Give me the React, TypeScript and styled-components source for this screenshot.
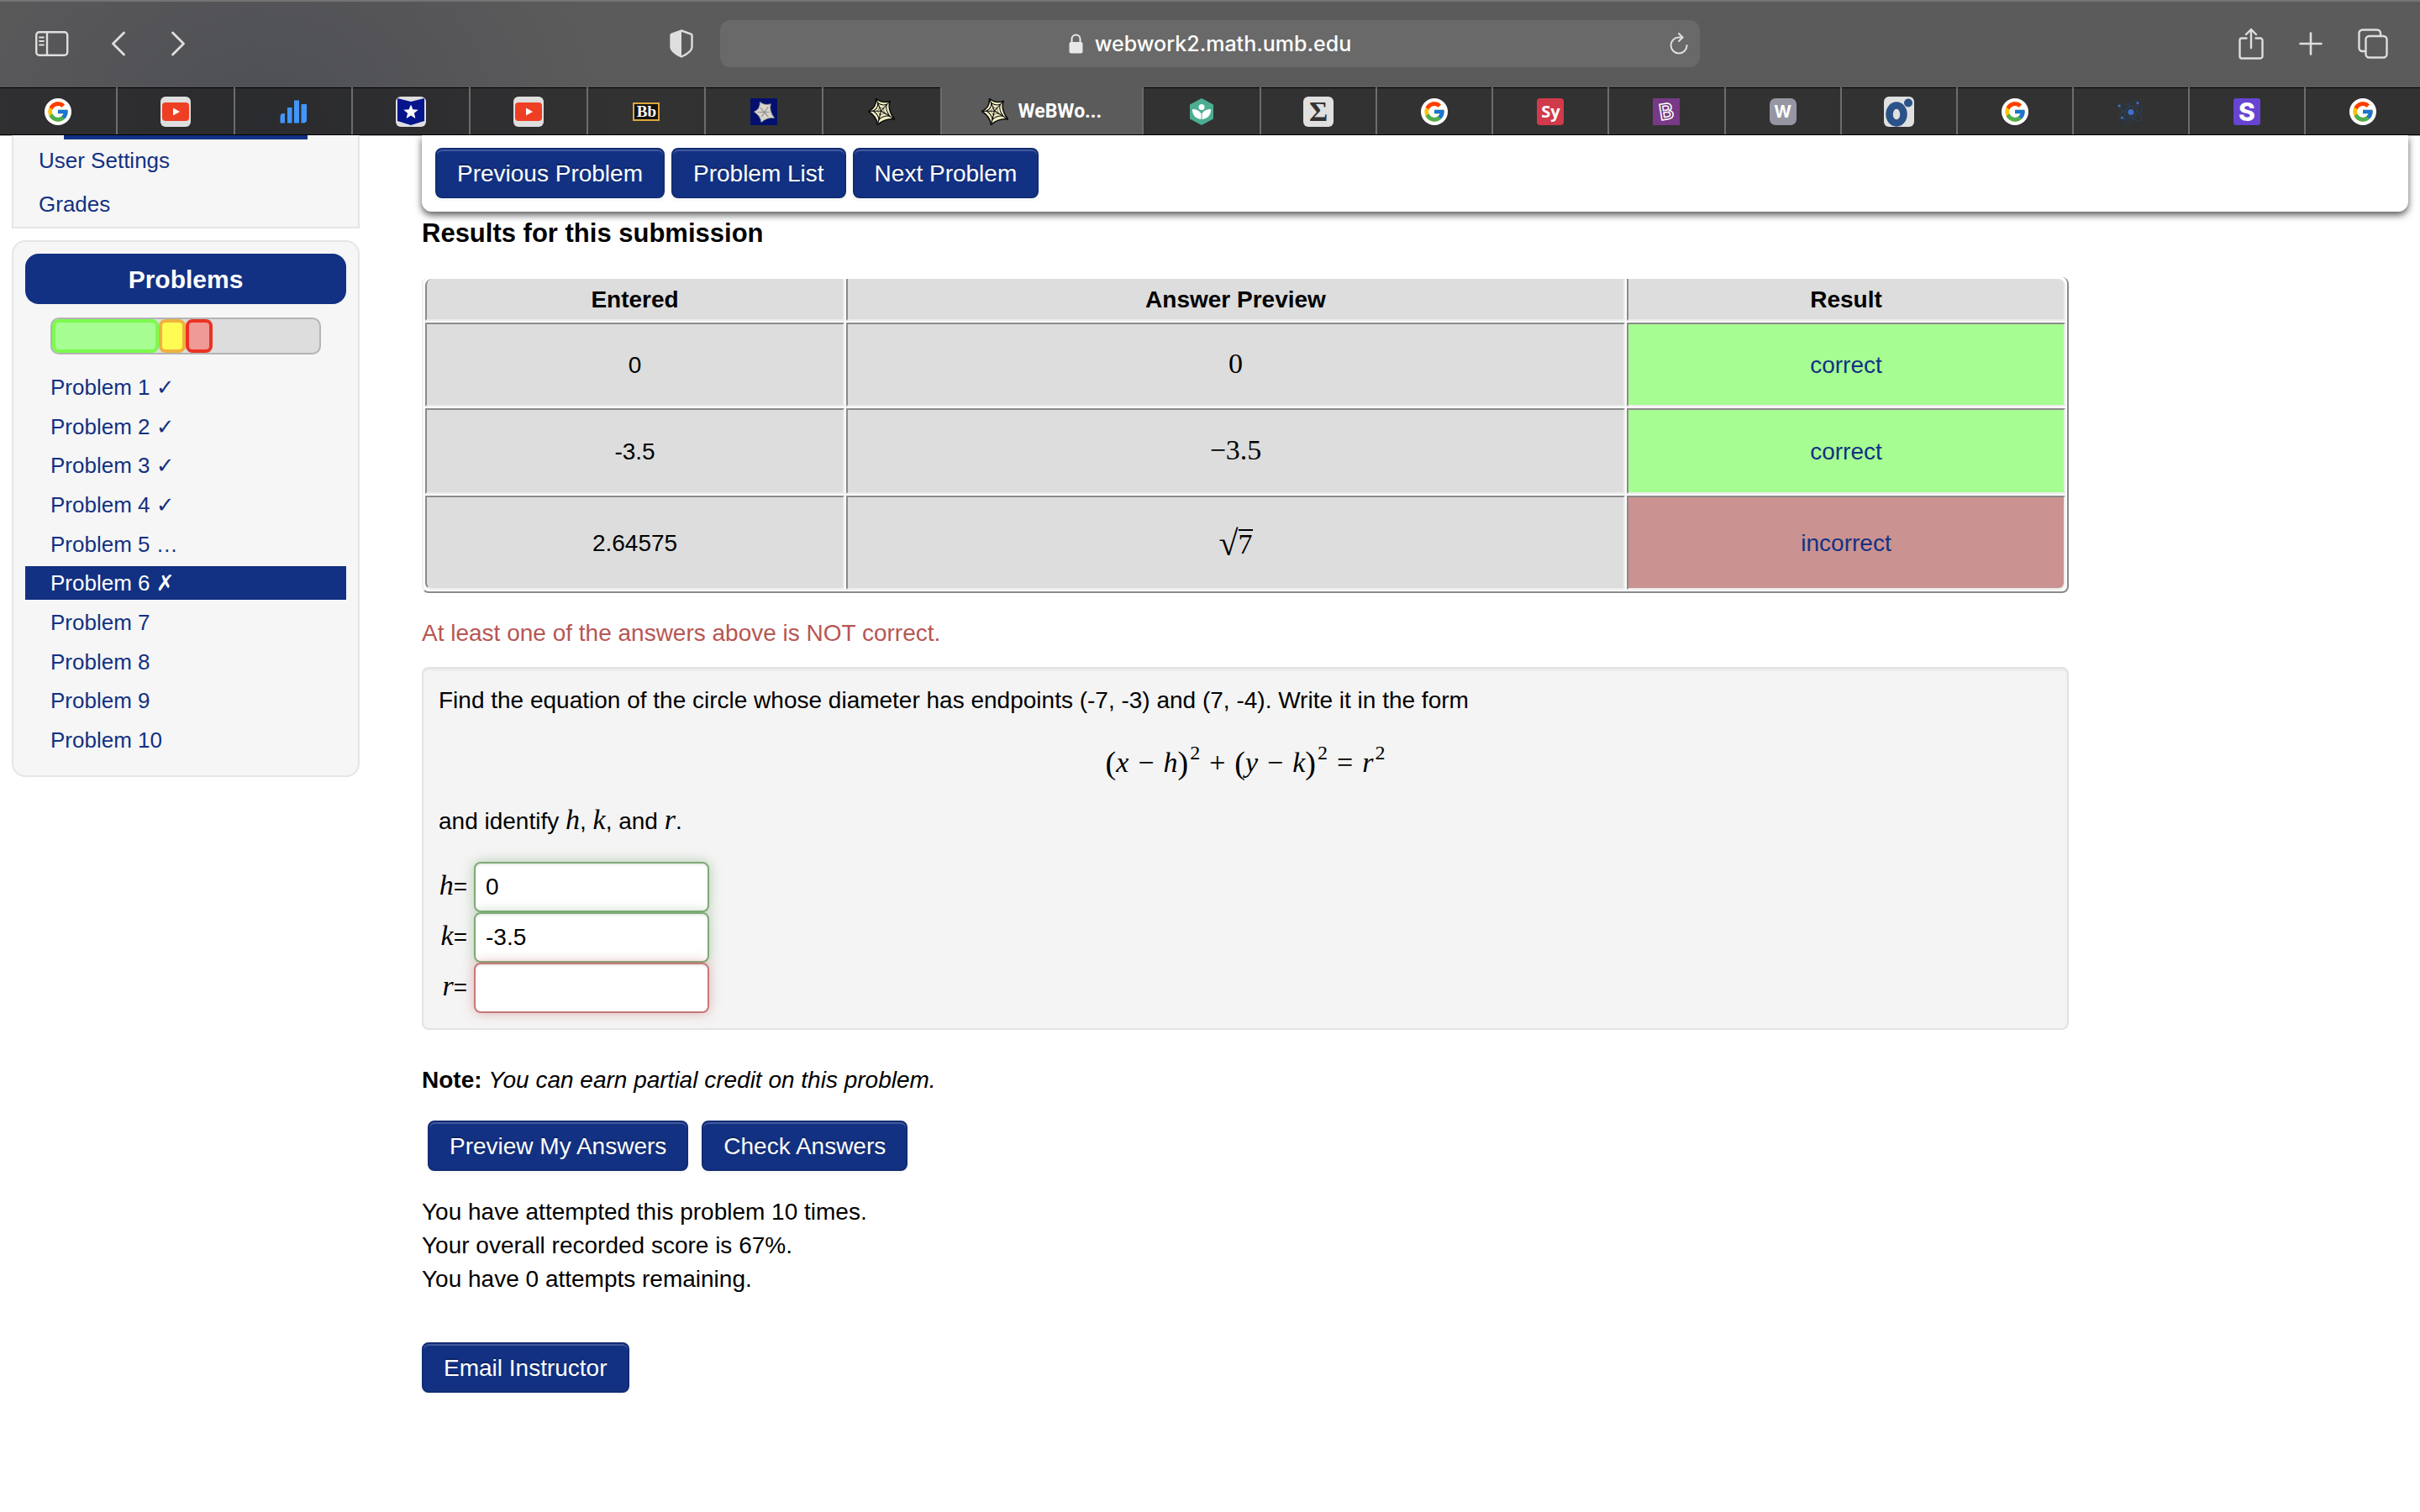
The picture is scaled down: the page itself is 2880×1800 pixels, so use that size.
import React from 'react';
import styled, { createGlobalStyle, css } from 'styled-components';
import { FcGoogle } from 'react-icons/fc';

const blue = '#123183';
const sans = '"Liberation Sans", Arial, Helvetica, sans-serif';
const ui = 'Inter, "Open Sans", sans-serif';
const math = '"Liberation Serif", "Times New Roman", serif';

const GlobalStyle = createGlobalStyle`
  *, *::before, *::after { box-sizing: border-box; }
  body { margin: 0; background: #fff; color: #000; font: 28px/40px ${sans}; }
  a { color: ${blue}; text-decoration: none; }
  h1, h2, p, ul { margin: 0; padding: 0; }
  ul { list-style: none; }
  svg { display: block; }
`;

/* ---------- browser window ---------- */

const Chrome = styled.header`
  border-bottom: 1px solid #000;
  box-shadow: 0 1px 0 #b5b5b5;
  background: radial-gradient(ellipse 420px 330px at 310px 140px, #4e4f55, #5b5b5b);
`;

const Toolbar = styled.div`
  display: grid;
  grid-template-columns: 1fr minmax(0, 1166px) 1fr;
  align-items: center;
  height: 104px;
  box-shadow: inset 0 2px 0 #747474;
`;

const ToolGroup = styled.div<{ $gap: number; $end?: boolean }>`
  display: flex;
  align-items: center;
  gap: ${(p) => p.$gap}px;
  padding: 0 ${(p) => (p.$end ? 38 : 32)}px 0 42px;
  justify-content: ${(p) => (p.$end ? 'flex-end' : 'flex-start')};
`;

const IconButton = styled.button<{ $push?: boolean }>`
  display: block;
  padding: 0;
  border: 0;
  background: none;
  color: #dedede;
  ${(p) => p.$push && css`margin-left: auto;`}
`;

const AddressBar = styled.div`
  display: grid;
  grid-template-columns: 1fr auto 1fr;
  align-items: center;
  height: 56px;
  padding: 0 14px;
  border-radius: 12px;
  background: #696969;
`;

const Address = styled.button`
  grid-column: 2;
  display: flex;
  align-items: center;
  gap: 14px;
  padding: 0;
  border: 0;
  background: none;
  color: #fff;
  font: 500 25px/40px ${ui};
`;

const Reload = styled(IconButton)`
  justify-self: end;
`;

const TabStrip = styled.nav`
  display: flex;
  height: 56px;
`;

const Tab = styled.a<{ $grow: number; $active?: boolean }>`
  flex: ${(p) => p.$grow} 1 0;
  display: flex;
  align-items: center;
  justify-content: center;
  gap: 11px;
  padding-top: 2px;
  border-right: 2px solid #6c6c6c;
  color: #fff;
  font: 700 23px/32px Roboto, ${ui};
  &:last-child { border-right: 0; }
  ${(p) =>
    !p.$active &&
    css`
      background: rgba(0, 0, 0, 0.45);
      box-shadow: inset 0 1px 0 #000;
    `}
`;

const Favicon = styled.span<{
  $size?: number;
  $bg?: string;
  $radius?: number;
  $font?: string;
}>`
  display: flex;
  align-items: center;
  justify-content: center;
  width: ${(p) => p.$size ?? 32}px;
  height: ${(p) => p.$size ?? 32}px;
  border-radius: ${(p) => p.$radius ?? 0}px;
  background: ${(p) => p.$bg ?? 'none'};
  color: #fff;
  font: ${(p) => p.$font ?? `700 22px/32px ${ui}`};
`;

const Blackboard = styled(Favicon)`
  height: 22px;
  border: 2px solid #dca63c;
  background: #111;
`;

const Sigma = styled(Favicon)`
  color: #333;
`;

const GoogleIcon = () => (
  <Favicon $bg="#fff" $radius={16}>
    <FcGoogle size={28} />
  </Favicon>
);

const YouTubeIcon = () => (
  <Favicon $size={36} $bg="#dfdfdf" $radius={6}>
    <svg width="32" height="22" viewBox="0 0 32 22">
      <rect width="32" height="22" rx="4" fill="#ee3f24" />
      <path d="M13 6.5v9l8-4.5z" fill="#fff" />
    </svg>
  </Favicon>
);

const BarsIcon = () => (
  <svg width="32" height="28" viewBox="0 0 32 28" fill="#4296f8">
    <path d="M0.500 27.500V20a4 4 0 0 1 4-4H6v11.500z" />
    <rect x="9" y="9" width="5.500" height="18.500" />
    <rect x="17" y="0.500" width="6" height="27" />
    <path d="M25.500 5H32v18.500a4 4 0 0 1-4 4h-2.500z" />
  </svg>
);

const BannerStarIcon = () => (
  <Favicon $size={36} $bg="#dfdfdf" $radius={6}>
    <svg width="36" height="36" viewBox="0 0 36 36">
      <path d="M2 2l16 4 16-4v27l-16 5-16-5z" fill="#05158c" />
      <path
        d="M18 9.500l2.400 5.800 6.300.4-4.800 4 1.500 6.200-5.400-3.400-5.400 3.400 1.500-6.200-4.800-4 6.300-.4z"
        fill="#fff"
      />
    </svg>
  </Favicon>
);

const webRing =
  'M9.500 .5Q17 6.500 26 3.500Q23 14 31.500 25Q20.500 23.500 11.500 31.500Q10.500 22 .5 15.500Q10 11.500 9.500 .5z';

const WebStarIcon = ({ soft }: { soft?: boolean }) => (
  <svg width="32" height="32" viewBox="0 0 32 32">
    {soft && <rect width="32" height="32" fill="#04106e" />}
    {soft ? (
      <g transform="translate(4 4) scale(.78)">
        <path d={webRing} fill="#d9d6c6" stroke="#8f90a2" strokeWidth="1" />
        <path d="M10 9l12 14M22 8L12 23M6 16h18" stroke="#8f8f9c" strokeWidth="1.500" />
      </g>
    ) : (
      <>
        <path d={webRing} fill="#f1efc4" stroke="#0c0c0c" strokeWidth="1.600" />
        <g fill="none" stroke="#0c0c0c" strokeWidth="1.600">
          <path d={webRing} transform="translate(5.600 5.100) scale(.64)" />
          <path d={webRing} transform="translate(10.500 10.200) scale(.32)" />
        </g>
        <path
          d="M15.500 15L9.500 .5M15.500 15L26 3.500M15.500 15l16 10M15.500 15l-4 16.500M15.500 15L.5 15.500"
          stroke="#0c0c0c"
          strokeWidth="1.100"
        />
      </>
    )}
  </svg>
);

const KhanIcon = () => (
  <svg width="28" height="32" viewBox="0 0 28 32">
    <path d="M14 0l14 7.500v17L14 32 0 24.500v-17z" fill="#4bae92" />
    <circle cx="14" cy="10.500" r="3.500" fill="#fff" />
    <path d="M3 13c6 0 9.500 2.500 11 6.500C15.500 15.500 19 13 25 13c.5 7-4.500 12-11 12S2.500 20 3 13z" fill="#fff" />
    <path d="M14 19v6" stroke="#4bae92" />
  </svg>
);

const ByjusIcon = () => (
  <svg width="32" height="32" viewBox="0 0 32 32">
    <rect width="32" height="32" fill="#783a86" />
    <text
      x="16"
      y="25"
      textAnchor="middle"
      fontFamily={ui}
      fontSize="26"
      fontWeight="600"
      fill="#6a2f78"
      stroke="#fff"
      strokeWidth="1.500"
      transform="rotate(-9 16 16)"
    >
      B
    </text>
  </svg>
);

const RingIcon = () => (
  <Favicon $size={36} $bg="#e0e0e0" $radius={6}>
    <svg width="36" height="36" viewBox="0 0 36 36">
      <ellipse cx="15" cy="21" rx="8.500" ry="10.500" fill="none" stroke="#2b5288" strokeWidth="8.500" />
      <circle cx="29" cy="7.500" r="5" fill="#2b5288" />
    </svg>
  </Favicon>
);

const AtomIcon = () => (
  <svg width="32" height="32" viewBox="0 0 32 32">
    <g fill="none" stroke="#28405f" strokeWidth="1">
      <ellipse cx="16" cy="16.500" rx="15" ry="6" transform="rotate(-25 16 16.500)" />
      <ellipse cx="16" cy="16.500" rx="15" ry="6" transform="rotate(35 16 16.500)" />
      <ellipse cx="16" cy="16.500" rx="15" ry="6" transform="rotate(-68 16 16.500)" />
    </g>
    <g fill="#3b72cf">
      <circle cx="16" cy="16.500" r="3.500" />
      <circle cx="24" cy="5.500" r="1.500" />
      <circle cx="2" cy="9" r="1.500" />
      <circle cx="5.500" cy="23" r="1.500" />
    </g>
  </svg>
);

const tabs: { name: string; icon: React.ReactNode; grow: number; label?: string }[] = [
  { name: 'Google', icon: <GoogleIcon />, grow: 140 },
  { name: 'YouTube', icon: <YouTubeIcon />, grow: 140 },
  { name: 'Statistics', icon: <BarsIcon />, grow: 140 },
  { name: 'Star', icon: <BannerStarIcon />, grow: 140 },
  { name: 'YouTube', icon: <YouTubeIcon />, grow: 140 },
  { name: 'Blackboard', icon: <Blackboard $font={`700 19px/18px ${math}`}>Bb</Blackboard>, grow: 140 },
  { name: 'WeBWorK home', icon: <WebStarIcon soft />, grow: 140 },
  { name: 'WeBWorK', icon: <WebStarIcon />, grow: 140 },
  { name: 'WeBWorK problem', icon: <WebStarIcon />, grow: 242, label: 'WeBWo...' },
  { name: 'Khan Academy', icon: <KhanIcon />, grow: 140 },
  {
    name: 'Sum',
    icon: (
      <Sigma $size={36} $bg="#e0e0e0" $radius={6} $font={`700 34px/36px ${math}`}>
        Σ
      </Sigma>
    ),
    grow: 138,
  },
  { name: 'Google', icon: <GoogleIcon />, grow: 138 },
  { name: 'Symbolab', icon: <Favicon $bg="#d13a4a" $radius={4} $font={`700 20px/32px "Open Sans", ${sans}`}>Sy</Favicon>, grow: 138 },
  { name: 'Byju', icon: <ByjusIcon />, grow: 138 },
  { name: 'W', icon: <Favicon $bg="#9696a3" $radius={7} $font={`700 20px/32px ${ui}`}>W</Favicon>, grow: 138 },
  { name: 'Ring', icon: <RingIcon />, grow: 138 },
  { name: 'Google', icon: <GoogleIcon />, grow: 138 },
  { name: 'Atom', icon: <AtomIcon />, grow: 138 },
  { name: 'S', icon: <Favicon $bg="#6744d2" $radius={3} $font={`800 30px/32px ${ui}`}>S</Favicon>, grow: 138 },
  { name: 'Google', icon: <GoogleIcon />, grow: 138 },
];

const BrowserChrome = () => (
  <Chrome>
    <Toolbar>
      <ToolGroup $gap={50}>
        <IconButton aria-label="Show sidebar">
          <svg width="40" height="30" viewBox="0 0 40 30" fill="none" stroke="currentColor" strokeWidth="2.400">
            <rect x="1.200" y="1.200" width="37" height="27.600" rx="3.500" />
            <path d="M14 1v28" />
            <path d="M5 7.500h5M5 12h5M5 16.500h5" strokeWidth="1.800" strokeLinecap="round" />
          </svg>
        </IconButton>
        <IconButton aria-label="Back">
          <svg width="20" height="30" viewBox="0 0 20 30" fill="none" stroke="currentColor" strokeWidth="2.800" strokeLinecap="round" strokeLinejoin="round">
            <path d="M15.500 2L2.500 15l13 13" />
          </svg>
        </IconButton>
        <IconButton aria-label="Forward">
          <svg width="20" height="30" viewBox="0 0 20 30" fill="none" stroke="currentColor" strokeWidth="2.800" strokeLinecap="round" strokeLinejoin="round">
            <path d="M3.500 2l13 13-13 13" />
          </svg>
        </IconButton>
        <IconButton aria-label="Privacy report" $push>
          <svg width="28" height="34" viewBox="0 0 28 34">
            <path
              d="M14 1.500L25.500 5.500c.6.300 1 .7 1 1.500v14c0 5-7 9-12.500 11.500C8.500 30 1.500 26 1.500 21V7c0-.8.400-1.200 1-1.500z"
              fill="none"
              stroke="currentColor"
              strokeWidth="2.400"
            />
            <path d="M14 1.500v31C8.500 30 1.500 26 1.500 21V6z" fill="currentColor" />
          </svg>
        </IconButton>
      </ToolGroup>
      <AddressBar>
        <Address>
          <svg width="17" height="24" viewBox="0 0 17 24">
            <rect x="0.500" y="10" width="16" height="13.500" rx="2" fill="#e8e8e8" />
            <path d="M3.500 11V6.500a5 5 0 0 1 10 0V11" fill="none" stroke="#e8e8e8" strokeWidth="2" />
          </svg>
          webwork2.math.umb.edu
        </Address>
        <Reload aria-label="Reload">
          <svg width="22" height="26" viewBox="0 0 22 26" fill="none" stroke="currentColor" strokeWidth="2" strokeLinecap="round" strokeLinejoin="round">
            <path d="M20.500 15a9.500 9.500 0 1 1-9.500-9.500h4" />
            <path d="M11 1l4.500 4.500L11 10" />
          </svg>
        </Reload>
      </AddressBar>
      <ToolGroup $gap={42} $end>
        <IconButton aria-label="Share">
          <svg width="30" height="38" viewBox="0 0 30 38" fill="none" stroke="currentColor" strokeWidth="2.400" strokeLinecap="round" strokeLinejoin="round">
            <path d="M9.500 12.500H4a2.500 2.500 0 0 0-2.500 2.500v19A2.500 2.500 0 0 0 4 36.500h22a2.500 2.500 0 0 0 2.500-2.500V15a2.500 2.500 0 0 0-2.500-2.500h-5.500" />
            <path d="M15 24V2M9 8l6-6 6 6" />
          </svg>
        </IconButton>
        <IconButton aria-label="New tab">
          <svg width="28" height="28" viewBox="0 0 28 28" stroke="currentColor" strokeWidth="2.600" strokeLinecap="round">
            <path d="M14 1.500v25M1.500 14h25" />
          </svg>
        </IconButton>
        <IconButton aria-label="Tab overview">
          <svg width="36" height="36" viewBox="0 0 36 36" fill="none" stroke="currentColor" strokeWidth="2.400" strokeLinejoin="round">
            <rect x="9.500" y="9" width="25" height="25.500" rx="4" />
            <path d="M9.500 27H5.500a4 4 0 0 1-4-4V5.500a4 4 0 0 1 4-4h17.500a4 4 0 0 1 4 4V9" />
          </svg>
        </IconButton>
      </ToolGroup>
    </Toolbar>
    <TabStrip>
      {tabs.map((t, i) => (
        <Tab key={i} href="#" aria-label={t.name} $grow={t.grow} $active={!!t.label}>
          {t.icon}
          {t.label}
        </Tab>
      ))}
    </TabStrip>
  </Chrome>
);

/* ---------- page ---------- */

const Page = styled.div`
  display: grid;
  grid-template-columns: 414px minmax(0, 1fr);
  gap: 74px;
  padding: 0 14px 142px;
  overflow: hidden;
`;

const Sidebar = styled.aside`
  display: flex;
  flex-direction: column;
  gap: 14px;
`;

const panel = css`
  border: 2px solid #e5e5e5;
  background: #f6f6f6;
  font-size: 26px;
`;

const MenuPanel = styled.nav`
  ${panel}
  border-top: 0;
  padding-bottom: 7px;
`;

const MenuCurrent = styled.div`
  height: 5px;
  margin: 0 60px 5px;
  background: ${blue};
`;

const MenuList = styled.ul`
  display: grid;
  gap: 12px;
  padding-left: 30px;
`;

const ProblemsPanel = styled.nav`
  ${panel}
  padding: 14px 14px 22px;
  border-radius: 16px;
`;

const PanelTitle = styled.h2`
  padding-top: 2px;
  border-radius: 16px;
  background: ${blue};
  color: #fff;
  font-size: 30px;
  line-height: 58px;
  text-align: center;
`;

const Progress = styled.div`
  display: flex;
  height: 44px;
  margin: 16px 30px 19px;
  border: 2px solid #b4b4b4;
  border-radius: 10px;
  background: #dddddd;
`;

const Segment = styled.span<{ $share: number; $edge: string; $fill: string }>`
  width: ${(p) => p.$share}%;
  border: 4px solid ${(p) => p.$edge};
  border-radius: 8px;
  background: ${(p) => p.$fill};
`;

const ProblemList = styled.ul`
  display: flex;
  flex-direction: column;
  justify-content: space-between;
  min-height: 460px;
`;

const ProblemLink = styled.a<{ $current?: boolean }>`
  display: block;
  padding-left: 30px;
  background: ${(p) => (p.$current ? blue : 'none')};
  color: ${(p) => (p.$current ? '#fff' : blue)};
`;

const Mark = styled.span`
  font-family: "DejaVu Sans", sans-serif;
  font-size: 26px;
  font-weight: 700;
  line-height: 24px;
`;

const Main = styled.main`
  display: flex;
  flex-direction: column;
`;

const NavPanel = styled.div`
  display: flex;
  gap: 8px;
  padding: 15px 16px 16px;
  border-radius: 0 0 12px 12px;
  background: #fff;
  box-shadow: 0 4px 8px rgba(0, 0, 0, 0.65);
`;

const Button = styled.button`
  height: 60px;
  padding: 2px 24px 0;
  border: 2px solid #112c74;
  border-radius: 8px;
  background: ${blue};
  box-shadow: inset 0 2px 0 rgba(255, 255, 255, 0.2), 0 2px 4px rgba(0, 0, 0, 0.05);
  color: #fff;
  font: 28px/40px ${sans};
  text-shadow: 0 -2px 0 rgba(0, 0, 0, 0.25);
`;

const Columns = styled.div`
  display: grid;
  grid-template-columns: minmax(0, 5fr) minmax(0, 1fr);
  gap: 12px;
`;

const Content = styled.div``;

const Heading = styled.h1`
  margin: 6px 0 32px;
  font-size: 31px;
  line-height: 40px;
`;

const Results = styled.table`
  width: 100%;
  table-layout: fixed;
  border-collapse: separate;
  border-spacing: 2px;
  border: 2px solid #8a8a8a;
  border-color: transparent #8a8a8a #8a8a8a #efefef;
  border-top: 0;
  border-radius: 8px;
  text-align: center;
`;

const HeadCell = styled.th<{ $width?: string }>`
  width: ${(p) => p.$width ?? 'auto'};
  height: 50px;
  padding: 2px 0 0;
  border: solid #8a8a8a;
  border-width: 0 2px 2px;
  border-color: #8a8a8a #ececec #ececec #8a8a8a;
  background: #dddddd;
  &:first-child { border-top-left-radius: 8px; }
  &:last-child { border-top-right-radius: 8px; }
`;

const Row = styled.tr<{ $height: number }>`
  height: ${(p) => p.$height}px;
  &:last-child td:first-child { border-bottom-left-radius: 8px; }
  &:last-child td:last-child { border-bottom-right-radius: 8px; }
`;

const Cell = styled.td<{ $bg?: string }>`
  padding: 2px 0 0;
  border: 2px solid;
  border-color: #8a8a8a #ececec #ececec #8a8a8a;
  background: ${(p) => p.$bg ?? '#dddddd'};
`;

const MathText = styled.span<{ $italic?: boolean }>`
  font-family: ${math};
  font-size: 34px;
  font-style: ${(p) => (p.$italic ? 'italic' : 'normal')};
  line-height: 24px;
`;

const Root = styled.span`
  display: inline-flex;
  align-items: flex-end;
  padding-top: 8px;
  font: 42px/34px ${math};
`;

const Radicand = styled.span`
  border-top: 2px solid #000;
  font-size: 34px;
  line-height: 32px;
`;

const Warning = styled.p`
  margin: 28px 0 20px;
  color: #b75653;
`;

const Well = styled.form`
  padding: 18px;
  border: 2px solid #e3e3e3;
  border-radius: 8px;
  background: #f4f4f4;
  box-shadow: inset 0 2px 2px rgba(0, 0, 0, 0.05);
`;

const Equation = styled.p`
  display: flex;
  justify-content: center;
  height: 40px;
  margin: 34px 0 30px;
  font: 34px/40px ${math};
`;

const Paren = styled.span`
  font-size: 38px;
`;

const Operator = styled.span`
  margin: 0 11px;
`;

const Power = styled.sup`
  margin-left: 2px;
  font-size: 24px;
  line-height: 16px;
  align-self: flex-start;
`;

const Answers = styled.div`
  display: grid;
  grid-template-columns: 34px 280px;
  column-gap: 8px;
  margin-top: 28px;
  align-items: center;
`;

const AnswerLabel = styled.label`
  text-align: right;
  white-space: nowrap;
`;

const AnswerInput = styled.input<{ $ok?: boolean }>`
  width: 100%;
  height: 60px;
  padding: 0 12px;
  border: 2px solid ${(p) => (p.$ok ? '#7eab77' : '#c47a77')};
  border-radius: 8px;
  background: #fff;
  box-shadow: inset 0 2px 2px rgba(0, 0, 0, 0.075),
    0 0 14px ${(p) => (p.$ok ? 'rgba(110, 165, 100, .5)' : 'rgba(205, 110, 110, .5)')};
  color: #000;
  font: 28px/40px ${sans};
`;

const Note = styled.p`
  margin: 40px 0 28px;
`;

const Actions = styled.div`
  display: flex;
  gap: 16px;
  padding-left: 7px;
  margin-bottom: 29px;
`;

const Email = styled(Button)`
  margin-top: 55px;
`;

const Var = ({ children }: { children: string }) => <MathText $italic>{children}</MathText>;

const problems = ['✓', '✓', '✓', '✓', '…', '✗', '', '', '', ''];

const answers = [
  { name: 'h', value: '0', ok: true },
  { name: 'k', value: '-3.5', ok: true },
  { name: 'r', value: '', ok: false },
];

const results = [
  { entered: '0', preview: <MathText>0</MathText>, ok: true, height: 100 },
  { entered: '-3.5', preview: <MathText>−3.5</MathText>, ok: true, height: 102 },
  {
    entered: '2.64575',
    preview: (
      <Root>
        √<Radicand>7</Radicand>
      </Root>
    ),
    ok: false,
    height: 112,
  },
];

export default function App() {
  return (
    <>
      <GlobalStyle />
      <BrowserChrome />
      <Page>
        <Sidebar>
          <MenuPanel>
            <MenuCurrent />
            <MenuList>
              <li><a href="#">User Settings</a></li>
              <li><a href="#">Grades</a></li>
            </MenuList>
          </MenuPanel>
          <ProblemsPanel>
            <PanelTitle>Problems</PanelTitle>
            <Progress>
              <Segment $share={40} $edge="#7bfb4c" $fill="#a6fd92" />
              <Segment $share={10} $edge="#f0b13f" $fill="#fffd54" />
              <Segment $share={10} $edge="#ea3323" $fill="#f09a98" />
            </Progress>
            <ProblemList>
              {problems.map((mark, i) => (
                <li key={i}>
                  <ProblemLink href="#" $current={i === 5}>
                    Problem {i + 1} {mark === '…' ? '…' : mark && <Mark>{mark}</Mark>}
                  </ProblemLink>
                </li>
              ))}
            </ProblemList>
          </ProblemsPanel>
        </Sidebar>
        <Main>
          <NavPanel>
            <Button>Previous Problem</Button>
            <Button>Problem List</Button>
            <Button>Next Problem</Button>
          </NavPanel>
          <Columns>
            <Content>
              <Heading>Results for this submission</Heading>
              <Results>
                <thead>
                  <tr>
                    <HeadCell scope="col" $width="499px">Entered</HeadCell>
                    <HeadCell scope="col">Answer Preview</HeadCell>
                    <HeadCell scope="col" $width="522px">Result</HeadCell>
                  </tr>
                </thead>
                <tbody>
                  {results.map((r) => (
                    <Row key={r.entered} $height={r.height}>
                      <Cell>{r.entered}</Cell>
                      <Cell>{r.preview}</Cell>
                      <Cell $bg={r.ok ? '#a6fd92' : '#ca9290'}>
                        <a href="#">{r.ok ? 'correct' : 'incorrect'}</a>
                      </Cell>
                    </Row>
                  ))}
                </tbody>
              </Results>
              <Warning>At least one of the answers above is NOT correct.</Warning>
              <Well>
                <p>
                  Find the equation of the circle whose diameter has endpoints (-7, -3) and (7, -4). Write it in
                  the form
                </p>
                <Equation>
                  <Paren>(</Paren><i>x</i><Operator>−</Operator><i>h</i><Paren>)</Paren><Power>2</Power>
                  <Operator>+</Operator>
                  <Paren>(</Paren><i>y</i><Operator>−</Operator><i>k</i><Paren>)</Paren><Power>2</Power>
                  <Operator>=</Operator>
                  <i>r</i><Power>2</Power>
                </Equation>
                <p>
                  and identify <Var>h</Var>, <Var>k</Var>, and <Var>r</Var>.
                </p>
                <Answers>
                  {answers.map((a) => (
                    <React.Fragment key={a.name}>
                      <AnswerLabel htmlFor={a.name}>
                        <Var>{a.name}</Var>=
                      </AnswerLabel>
                      <AnswerInput id={a.name} type="text" defaultValue={a.value} $ok={a.ok} />
                    </React.Fragment>
                  ))}
                </Answers>
              </Well>
              <Note>
                <b>Note:</b> <i>You can earn partial credit on this problem.</i>
              </Note>
              <Actions>
                <Button>Preview My Answers</Button>
                <Button>Check Answers</Button>
              </Actions>
              <p>You have attempted this problem 10 times.</p>
              <p>Your overall recorded score is 67%.</p>
              <p>You have 0 attempts remaining.</p>
              <Email>Email Instructor</Email>
            </Content>
          </Columns>
        </Main>
      </Page>
    </>
  );
}
